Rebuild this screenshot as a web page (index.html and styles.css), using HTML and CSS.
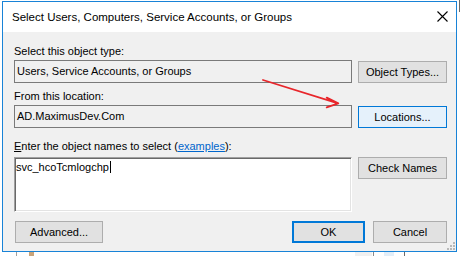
FILE: index.html
```html
<!DOCTYPE html>
<html>
<head>
<meta charset="utf-8">
<link rel="stylesheet" href="styles.css">
</head>
<body>
<div class="desk">
  <span class="mark m1"></span><span class="mark m2"></span><span class="mark m3"></span><span class="mark m4"></span><span class="mark m5"></span><span class="mark m6"></span><span class="mark m7"></span>
</div>
<div class="win">
  <div class="titlebar">
    <span class="title">Select Users, Computers, Service Accounts, or Groups</span>
    <svg class="close" width="11" height="11" viewBox="0 0 11 11"><path d="M0.5 0.5 L10.5 10.5 M10.5 0.5 L0.5 10.5" stroke="#000" stroke-width="1.1" fill="none"/></svg>
  </div>
  <div class="content">
    <div class="label">Select this object type:</div>
    <div class="row">
      <div class="field">Users, Service Accounts, or Groups</div>
      <button class="btn btn-offset">Object Types...</button>
    </div>
    <div class="label label2">From this location:</div>
    <div class="row">
      <div class="field">AD.MaximusDev.Com</div>
      <button class="btn btn-offset btn-hot">Locations...</button>
    </div>
    <div class="label label3"><u>E</u>nter the object names to select (<a class="link">examples</a>):</div>
    <div class="row row-names">
      <div class="names">svc_hcoTcmlogchp<span class="caret"></span></div>
      <button class="btn">Check Names</button>
    </div>
    <div class="footer">
      <button class="btn btn-adv">Advanced...</button>
      <button class="btn btn-ok">OK</button>
      <button class="btn btn-cancel">Cancel</button>
    </div>
  </div>
  <svg class="grip" width="8" height="8" viewBox="0 0 8 8">
    <rect x="6" y="0" width="2" height="2" fill="#b8b8b8"/>
    <rect x="3" y="3" width="2" height="2" fill="#b8b8b8"/>
    <rect x="6" y="3" width="2" height="2" fill="#b8b8b8"/>
    <rect x="0" y="6" width="2" height="2" fill="#b8b8b8"/>
    <rect x="3" y="6" width="2" height="2" fill="#b8b8b8"/>
    <rect x="6" y="6" width="2" height="2" fill="#b8b8b8"/>
  </svg>
</div>
<svg class="arrow" width="461" height="256" viewBox="0 0 461 256">
  <path d="M263 80 L338 103.3 M326.7 97.6 L338.3 103.3 L326.7 107.4" stroke="#e8262b" stroke-width="1.8" fill="none" stroke-linecap="round" stroke-linejoin="round"/>
</svg>
</body>
</html>
```
FILE: styles.css
```css
html, body {
  margin: 0;
  padding: 0;
}
body {
  width: 461px;
  height: 256px;
  overflow: hidden;
  background: #ffffff;
  position: relative;
  font-family: "Liberation Sans", Arial, sans-serif;
  font-size: 11px;
  color: #000;
}
.desk {
  position: absolute;
  left: 0;
  top: 0;
  width: 461px;
  height: 256px;
}
.mark {
  position: absolute;
  display: block;
}
.m1 { left: 16px; top: 252px; width: 1px; height: 4px; background: #a0a0a0; }
.m2 { left: 29px; top: 252px; width: 5px; height: 4px; background: #c9a47a; }
.m3 { left: 355px; top: 252px; width: 17px; height: 4px; background: #f0f0f0; }
.m4 { left: 373px; top: 252px; width: 1px; height: 4px; background: #8a8a8a; }
.m5 { left: 384px; top: 252px; width: 10px; height: 4px; background: #e3eef8; }
.m6 { left: 404px; top: 252px; width: 1px; height: 4px; background: #6a6a6a; }
.m7 { left: 459px; top: 0; width: 1px; height: 12px; background: #6a6a6a; }
.win {
  position: relative;
  box-sizing: border-box;
  margin: 1px 0 0 2px;
  width: 455px;
  height: 251px;
  border: 1px solid #1883d7;
  background: #f0f0f0;
}
.titlebar {
  height: 30px;
  background: #ffffff;
  display: flex;
  align-items: center;
  justify-content: space-between;
  padding: 0 8px 0 9px;
}
.title {
  font-size: 11.5px;
  line-height: 30px;
  color: #000;
}
.close {
  display: block;
  margin-top: -1px;
}
.content {
  padding: 13px 9px 8px 11px;
}
.label {
  height: 13px;
  line-height: 13px;
  white-space: nowrap;
}
.label2 {
  margin-top: 7px;
}
.label3 {
  margin-top: 12px;
}
.link {
  color: #0066cc;
  text-decoration: underline;
}
.row {
  display: grid;
  grid-template-columns: 338px 89px;
  column-gap: 6px;
  margin-top: 2px;
  align-items: start;
}
.row-names {
  margin-top: 4px;
}
.field {
  box-sizing: border-box;
  height: 23px;
  border: 1px solid #7a7a7a;
  background: #f0f0f0;
  padding-left: 2px;
  line-height: 21px;
  white-space: nowrap;
}
.names {
  box-sizing: border-box;
  height: 55px;
  background: #ffffff;
  border: 1px solid;
  border-color: #a0a0a0 #ffffff #ffffff #a0a0a0;
  box-shadow: inset 1px 1px 0 #696969, inset -1px -1px 0 #e3e3e3;
  padding: 3px 0 0 1px;
  line-height: 13px;
}
.caret {
  display: inline-block;
  width: 1px;
  height: 12px;
  background: #000;
  vertical-align: -2px;
  margin-left: 1px;
}
.btn {
  box-sizing: border-box;
  height: 22px;
  margin: 0;
  padding: 0;
  border: 1px solid #adadad;
  background: #e1e1e1;
  font-family: "Liberation Sans", Arial, sans-serif;
  font-size: 11px;
  color: #000;
  line-height: 20px;
  text-align: center;
}
.btn-offset {
  margin-top: 1px;
}
.btn-hot {
  border-color: #0078d7;
  background: #e5f1fb;
}
.footer {
  display: flex;
  margin-top: 9px;
  gap: 8px;
}
.btn-adv {
  width: 88px;
  margin-left: 1px;
}
.btn-ok {
  width: 73px;
  margin-left: auto;
  border: 2px solid #0078d7;
  line-height: 18px;
}
.btn-cancel {
  width: 74px;
}
.grip {
  position: absolute;
  right: 1px;
  bottom: 1px;
  display: block;
}
.arrow {
  position: absolute;
  left: 0;
  top: 0;
  pointer-events: none;
}
```
